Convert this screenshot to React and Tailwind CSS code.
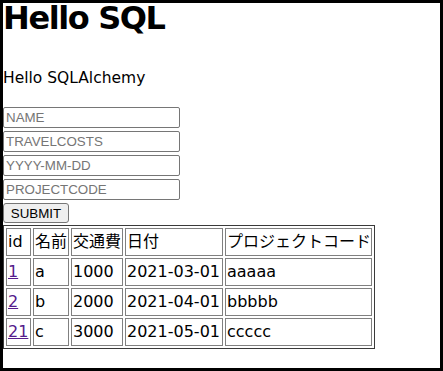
import React from 'react';

const rows = [
  { id: '1', name: 'a', cost: '1000', date: '2021-03-01', code: 'aaaaa' },
  { id: '2', name: 'b', cost: '2000', date: '2021-04-01', code: 'bbbbb' },
  { id: '21', name: 'c', cost: '3000', date: '2021-05-01', code: 'ccccc' },
];

const fields = ['NAME', 'TRAVELCOSTS', 'YYYY-MM-DD', 'PROJECTCODE'];

const cell = 'h-[28px] border border-[#808080] p-px align-middle whitespace-nowrap overflow-visible';

export default function App() {
  return (
    <div className="box-border h-[371px] w-[443px] overflow-hidden border-[3px] border-black bg-white font-['DejaVu_Sans','Noto_Sans_CJK_JP',sans-serif] text-black">
      <h1 className="h-[30px] text-[32px] font-bold leading-[30px] tracking-[-1.4px]">Hello SQL</h1>
      <p className="mt-[33px] text-[15.5px] leading-[24px]">Hello SQLAlchemy</p>

      <form className="mt-[17px] flex flex-col items-start gap-[3px] font-['Liberation_Sans',Arial,sans-serif] text-[13.33px]">
        {fields.map((f) => (
          <input
            key={f}
            type="text"
            placeholder={f}
            className="h-[21px] w-[177px] rounded-[2px] border border-[#767676] px-[2px] py-px text-black placeholder:text-[#757575] outline-none"
          />
        ))}
        <button
          type="button"
          className="h-[20px] w-[66px] rounded-[3px] border border-[#767676] bg-[#efefef] text-black"
        >
          SUBMIT
        </button>
      </form>

      <table className="mt-[2px] w-[372px] table-fixed border-separate border-spacing-[2px] border border-[#3a3a3a] text-[16px] leading-[24px]">
        <tbody>
          <tr>
            <td className={`${cell} w-[25px]`}>id</td>
            <td className={`${cell} w-[36px]`}>名前</td>
            <td className={`${cell} w-[52px]`}>交通費</td>
            <td className={`${cell} w-[98px]`}>日付</td>
            <td className={`${cell} w-[147px]`}>プロジェクトコード</td>
          </tr>
          {rows.map((r) => (
            <tr key={r.id}>
              <td className={cell}>
                <a href="#" className="text-[#551a8b] underline">{r.id}</a>
              </td>
              <td className={cell}>{r.name}</td>
              <td className={cell}>{r.cost}</td>
              <td className={cell}>{r.date}</td>
              <td className={cell}>{r.code}</td>
            </tr>
          ))}
        </tbody>
      </table>
    </div>
  );
}
